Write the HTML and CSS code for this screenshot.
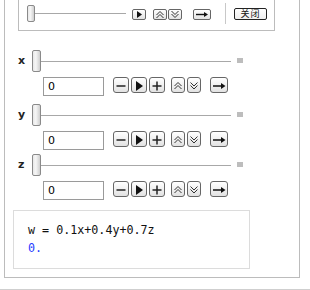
FILE: index.html
```html
<!DOCTYPE html>
<html>
<head>
<meta charset="utf-8">
<link rel="stylesheet" href="styles.css">
</head>
<body>
<div class="frame">
  <div class="toppanel">
    <div class="thumb small"></div>
    <div class="track top"></div>
    <div class="tbtns">
      <span class="btn s b14"><svg width="12" height="9" viewBox="0 0 12 9"><polygon points="4,1 9,4.5 4,8" fill="#111"/></svg></span>
      <span class="btn s b14 up1"><svg width="12" height="9" viewBox="0 0 12 9"><polyline points="2.5,5 6,1.5 9.5,5" fill="none" stroke="#333" stroke-width="1"/><polyline points="2.5,8 6,4.5 9.5,8" fill="none" stroke="#333" stroke-width="1"/></svg></span>
      <span class="btn s b14 dn1"><svg width="12" height="9" viewBox="0 0 12 9"><polyline points="2.5,1 6,4.5 9.5,1" fill="none" stroke="#333" stroke-width="1"/><polyline points="2.5,4 6,7.5 9.5,4" fill="none" stroke="#333" stroke-width="1"/></svg></span>
      <span class="btn s b18 ar1"><svg width="16" height="9" viewBox="0 0 16 9"><line x1="2" y1="4.5" x2="12" y2="4.5" stroke="#111" stroke-width="1.4"/><polygon points="10,2 14,4.5 10,7" fill="#111"/></svg></span>
    </div>
    <div class="sep"></div>
    <span class="close">关闭</span>
  </div>

  <div class="rows">
    <div class="row first">
      <div class="line1">
        <span class="lbl">x</span>
        <div class="thumb"></div>
        <div class="track"></div>
        <div class="sq"></div>
      </div>
      <div class="line2">
        <div class="inp">0</div>
        <div class="btns">
          <span class="btn b16"><svg width="14" height="13" viewBox="0 0 14 13"><line x1="2.5" y1="7" x2="11.5" y2="7" stroke="#222" stroke-width="1.5"/></svg></span>
          <span class="btn b16 g2"><svg width="14" height="13" viewBox="0 0 14 13"><polygon points="4,2 11,7 4,12" fill="#111"/></svg></span>
          <span class="btn b16 g2"><svg width="14" height="13" viewBox="0 0 14 13"><line x1="2.5" y1="7" x2="11.5" y2="7" stroke="#222" stroke-width="1.5"/><line x1="7" y1="2.5" x2="7" y2="11.5" stroke="#222" stroke-width="1.5"/></svg></span>
          <span class="btn b14 g6"><svg width="12" height="13" viewBox="0 0 12 13"><polyline points="2.5,7 6,3.5 9.5,7" fill="none" stroke="#333" stroke-width="1"/><polyline points="2.5,10 6,6.5 9.5,10" fill="none" stroke="#333" stroke-width="1"/></svg></span>
          <span class="btn b14 g2"><svg width="12" height="13" viewBox="0 0 12 13"><polyline points="2.5,3.5 6,7 9.5,3.5" fill="none" stroke="#333" stroke-width="1"/><polyline points="2.5,6.5 6,10 9.5,6.5" fill="none" stroke="#333" stroke-width="1"/></svg></span>
          <span class="btn b18 g9"><svg width="16" height="13" viewBox="0 0 16 13"><line x1="2" y1="7" x2="12" y2="7" stroke="#111" stroke-width="1.5"/><polygon points="10,4 14.5,7 10,10" fill="#111"/></svg></span>
        </div>
      </div>
    </div>

    <div class="row">
      <div class="line1">
        <span class="lbl">y</span>
        <div class="thumb"></div>
        <div class="track"></div>
        <div class="sq"></div>
      </div>
      <div class="line2">
        <div class="inp">0</div>
        <div class="btns">
          <span class="btn b16"><svg width="14" height="13" viewBox="0 0 14 13"><line x1="2.5" y1="7" x2="11.5" y2="7" stroke="#222" stroke-width="1.5"/></svg></span>
          <span class="btn b16 g2"><svg width="14" height="13" viewBox="0 0 14 13"><polygon points="4,2 11,7 4,12" fill="#111"/></svg></span>
          <span class="btn b16 g2"><svg width="14" height="13" viewBox="0 0 14 13"><line x1="2.5" y1="7" x2="11.5" y2="7" stroke="#222" stroke-width="1.5"/><line x1="7" y1="2.5" x2="7" y2="11.5" stroke="#222" stroke-width="1.5"/></svg></span>
          <span class="btn b14 g6"><svg width="12" height="13" viewBox="0 0 12 13"><polyline points="2.5,7 6,3.5 9.5,7" fill="none" stroke="#333" stroke-width="1"/><polyline points="2.5,10 6,6.5 9.5,10" fill="none" stroke="#333" stroke-width="1"/></svg></span>
          <span class="btn b14 g2"><svg width="12" height="13" viewBox="0 0 12 13"><polyline points="2.5,3.5 6,7 9.5,3.5" fill="none" stroke="#333" stroke-width="1"/><polyline points="2.5,6.5 6,10 9.5,6.5" fill="none" stroke="#333" stroke-width="1"/></svg></span>
          <span class="btn b18 g9"><svg width="16" height="13" viewBox="0 0 16 13"><line x1="2" y1="7" x2="12" y2="7" stroke="#111" stroke-width="1.5"/><polygon points="10,4 14.5,7 10,10" fill="#111"/></svg></span>
        </div>
      </div>
    </div>

    <div class="row">
      <div class="line1">
        <span class="lbl">z</span>
        <div class="thumb"></div>
        <div class="track"></div>
        <div class="sq"></div>
      </div>
      <div class="line2">
        <div class="inp">0</div>
        <div class="btns">
          <span class="btn b16"><svg width="14" height="13" viewBox="0 0 14 13"><line x1="2.5" y1="7" x2="11.5" y2="7" stroke="#222" stroke-width="1.5"/></svg></span>
          <span class="btn b16 g2"><svg width="14" height="13" viewBox="0 0 14 13"><polygon points="4,2 11,7 4,12" fill="#111"/></svg></span>
          <span class="btn b16 g2"><svg width="14" height="13" viewBox="0 0 14 13"><line x1="2.5" y1="7" x2="11.5" y2="7" stroke="#222" stroke-width="1.5"/><line x1="7" y1="2.5" x2="7" y2="11.5" stroke="#222" stroke-width="1.5"/></svg></span>
          <span class="btn b14 g6"><svg width="12" height="13" viewBox="0 0 12 13"><polyline points="2.5,7 6,3.5 9.5,7" fill="none" stroke="#333" stroke-width="1"/><polyline points="2.5,10 6,6.5 9.5,10" fill="none" stroke="#333" stroke-width="1"/></svg></span>
          <span class="btn b14 g2"><svg width="12" height="13" viewBox="0 0 12 13"><polyline points="2.5,3.5 6,7 9.5,3.5" fill="none" stroke="#333" stroke-width="1"/><polyline points="2.5,6.5 6,10 9.5,6.5" fill="none" stroke="#333" stroke-width="1"/></svg></span>
          <span class="btn b18 g9"><svg width="16" height="13" viewBox="0 0 16 13"><line x1="2" y1="7" x2="12" y2="7" stroke="#111" stroke-width="1.5"/><polygon points="10,4 14.5,7 10,10" fill="#111"/></svg></span>
        </div>
      </div>
    </div>
  </div>

  <div class="output">
    <div class="code">w = 0.1x+0.4y+0.7z</div>
    <div class="code res">0.</div>
  </div>
</div>
<div class="rule"></div>
</body>
</html>
```
FILE: styles.css
```css
html, body {
  margin: 0;
  padding: 0;
  background: #fff;
}
body {
  width: 310px;
  height: 290px;
  overflow: hidden;
  font-family: "DejaVu Sans", Verdana, sans-serif;
}
.frame {
  margin-left: 4px;
  width: 296px;
  box-sizing: border-box;
  border: 1px solid #bcbcbc;
  border-top: none;
  padding-bottom: 8px;
}
.toppanel {
  margin-left: 13px;
  width: 257px;
  height: 31px;
  box-sizing: border-box;
  border: 1px solid #bcbcbc;
  border-top: none;
  padding: 0 0 4px 8px;
  display: flex;
  align-items: center;
}
.thumb {
  width: 9px;
  height: 22px;
  box-sizing: border-box;
  border: 1px solid #8a8a8a;
  border-radius: 2px;
  background: linear-gradient(to right, #e8e8e8, #f6f6f6 40%, #cfcfcf);
  flex: none;
}
.thumb.small {
  width: 8px;
  height: 17px;
}
.track {
  height: 1px;
  background: #a8a8a8;
  width: 190px;
  flex: none;
}
.track.top {
  width: 91px;
}
.tbtns {
  display: flex;
  margin-left: 6px;
  align-items: center;
  padding-top: 2px;
}
.btn {
  display: flex;
  align-items: center;
  justify-content: center;
  box-sizing: border-box;
  height: 16px;
  border: 1px solid #666;
  border-radius: 3px;
  background: linear-gradient(#ffffff, #e2e2e2);
  flex: none;
}
.btn.s {
  height: 11px;
  border-radius: 2px;
}
.b14 { width: 14px; }
.b16 { width: 16px; }
.b18 { width: 18px; }
.g2 { margin-left: 2px; }
.g6 { margin-left: 6px; }
.g9 { margin-left: 9px; }
.up1 { margin-left: 7px; }
.dn1 { margin-left: 1px; }
.ar1 { margin-left: 11px; }
.sep {
  width: 1px;
  height: 21px;
  background: #c8c8c8;
  margin-left: 14px;
}
.close {
  margin-left: 8px;
  width: 33px;
  height: 12px;
  box-sizing: border-box;
  border: 1px solid #222;
  border-radius: 2px;
  background: linear-gradient(#fff, #eee);
  font-family: "Noto Sans CJK SC", sans-serif;
  font-size: 9px;
  line-height: 10px;
  text-align: center;
  letter-spacing: 1px;
  color: #111;
  margin-top: 1px;
}
.rows {
  padding-left: 13px;
  margin-top: 19px;
}
.row {
  margin-bottom: 4px;
}
.row.first {
  margin-bottom: 8px;
}
.line1 {
  display: flex;
  align-items: center;
  height: 22px;
}
.lbl {
  width: 14px;
  font-size: 11px;
  font-weight: bold;
  color: #222;
  line-height: 12px;
  padding-top: 0;
}
.sq {
  width: 6px;
  height: 5px;
  background: #bdbdbd;
  margin-left: 6px;
  margin-top: -2px;
}
.line2 {
  display: flex;
  align-items: flex-start;
  margin-top: 5px;
  padding-left: 25px;
}
.inp {
  width: 61px;
  height: 19px;
  box-sizing: border-box;
  border: 1px solid #9a9a9a;
  font-size: 11px;
  line-height: 17px;
  padding-left: 4px;
  color: #000;
}
.btns {
  display: flex;
  margin-left: 9px;
}
.output {
  margin-top: 10px;
  margin-left: 8px;
  width: 237px;
  height: 59px;
  box-sizing: border-box;
  border: 1px solid #dcdcdc;
  padding: 10px 0 0 14px;
}
.code {
  font-family: "DejaVu Sans Mono", monospace;
  font-size: 11.7px;
  line-height: 18px;
  color: #111;
  white-space: pre;
}
.code.res {
  color: #1f3cff;
}
.rule {
  margin-top: 11px;
  height: 1px;
  background: #cfcfcf;
}
```
